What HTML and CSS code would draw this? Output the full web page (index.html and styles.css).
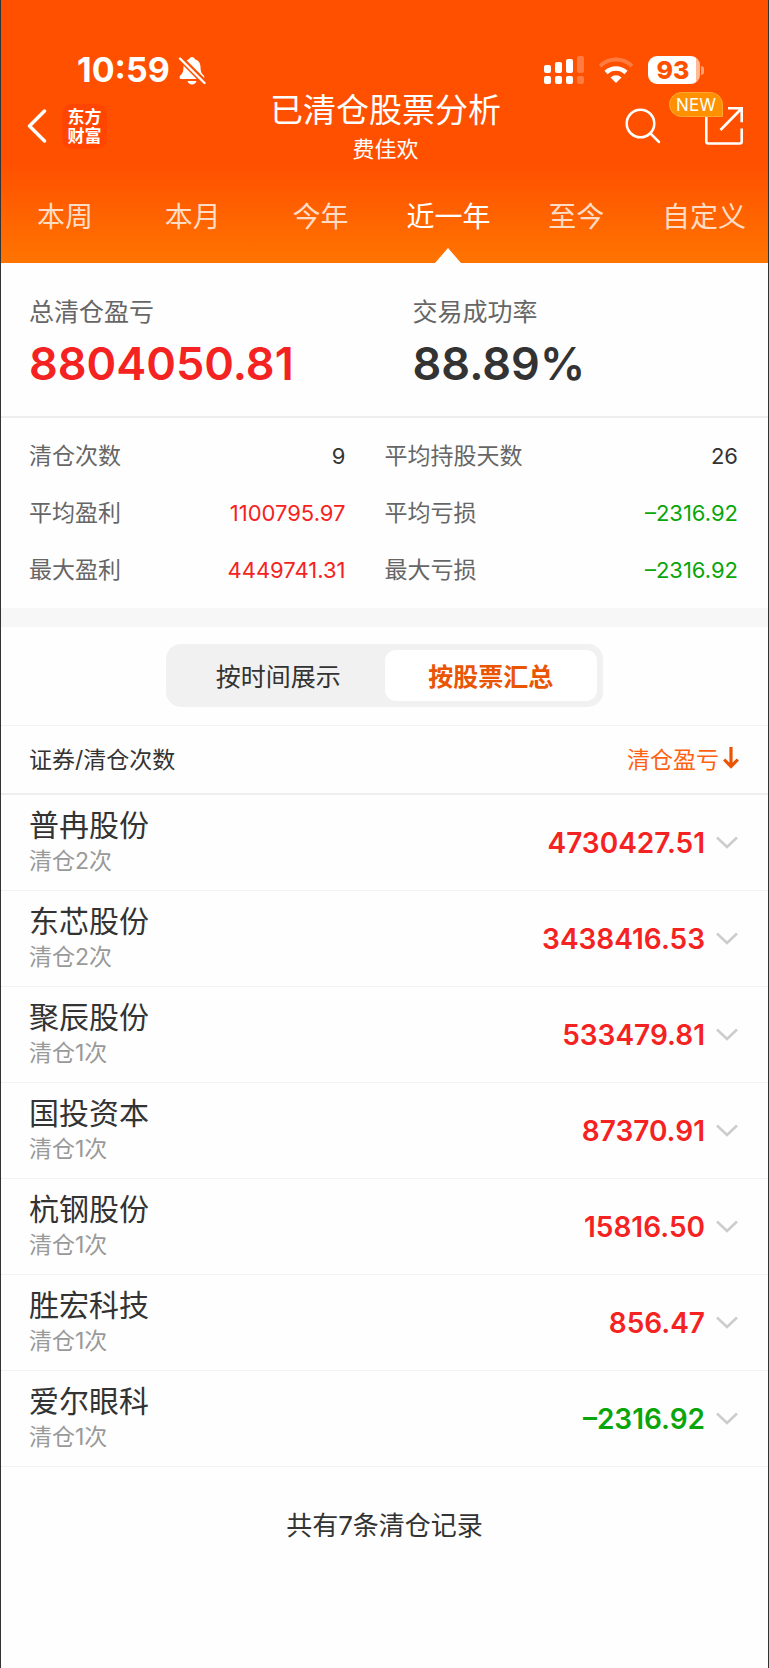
FILE: index.html
```html
<!DOCTYPE html>
<html lang="zh-CN">
<head>
  <meta charset="UTF-8" />
  <meta name="viewport" content="width=device-width, initial-scale=1" />
  <title>已清仓股票分析</title>

  <link rel="stylesheet" href="styles.css">
</head>
<body>

  <header class="header">
    <!-- Status bar -->
    <div class="status-bar">
      <div class="status-left">
        <span class="clock">10:59</span>
        <svg class="icon-bell" width="28" height="29" viewBox="0 0 28 29" aria-hidden="true">
          <path fill="#fff" d="M14 1c-1.500 0-2.600 1-2.900 2.200C7.200 4.400 5.500 7.500 5.500 11c0 4-.8 6.300-3 8.200C1.300 20.300 1.200 23 3.200 23h21.600c2 0 1.900-2.700.7-3.800-2.200-1.900-3-4.200-3-8.200 0-3.500-1.700-6.600-5.600-7.800C16.600 2 15.500 1 14 1zM9.500 25h9c-.6 2.200-2.200 3.500-4.500 3.500S10.100 27.200 9.500 25z"/>
          <path stroke="#ff5000" stroke-width="6" d="M1 1l27 27"/>
          <path stroke="#fff" stroke-width="2.400" stroke-linecap="round" d="M2 2.500l24.500 24.500"/>
        </svg>
      </div>
      <div class="status-right">
        <svg width="40" height="28" viewBox="0 0 40 28" fill="#fff" aria-hidden="true">
          <rect x="0" y="9" width="7" height="8" rx="2"/>
          <rect x="11" y="6" width="7" height="11" rx="2"/>
          <rect x="22" y="3" width="7" height="14" rx="2"/>
          <rect x="33" y="0" width="7" height="17" rx="2" opacity=".25"/>
          <rect x="0" y="20" width="7" height="8" rx="2"/>
          <rect x="11" y="20" width="7" height="8" rx="2"/>
          <rect x="22" y="20" width="7" height="8" rx="2"/>
          <rect x="33" y="20" width="7" height="8" rx="2" opacity=".25"/>
        </svg>
        <svg class="icon-wifi" width="36" height="28" viewBox="0 0 36 28" fill="none" stroke="#fff" aria-hidden="true">
          <path stroke-width="4" opacity=".25" d="M2 10a23 23 0 0 1 32 0"/>
          <path stroke-width="4.500" d="M8 16.500a14.500 14.500 0 0 1 20 0"/>
          <path fill="#fff" stroke="none" d="M18 27l-5.500-5.500a8 8 0 0 1 11 0z"/>
        </svg>
        <div class="battery">
          <span class="battery-body">93</span>
          <span class="battery-cap"></span>
        </div>
      </div>
    </div>

    <!-- Title bar -->
    <div class="title-bar">
      <div class="title-left">
        <button class="icon-btn" type="button" aria-label="返回">
          <svg width="20" height="34" viewBox="0 0 20 34" fill="none" stroke="#fff" stroke-width="3.500" stroke-linecap="round" stroke-linejoin="round"><path d="M17.500 2L2.500 17l15 15"/></svg>
        </button>
        <div class="logo">东方<br>财富</div>
      </div>
      <div class="title-center">
        <h1>已清仓股票分析</h1>
        <p>费佳欢</p>
      </div>
      <div class="title-right">
        <button class="icon-btn" type="button" aria-label="搜索">
          <svg width="36" height="36" viewBox="0 0 36 36" fill="none" stroke="#fff" stroke-width="2.500" stroke-linecap="round"><circle cx="15.500" cy="15.500" r="13.800"/><path d="M25.500 25.500l8.500 8.500"/></svg>
        </button>
        <button class="icon-btn share" type="button" aria-label="分享">
          <svg width="40" height="40" viewBox="0 0 40 40" fill="none" stroke="#fff" stroke-width="2.600"><path d="M2.300 6v29.500q0 2 2 2h31.400q2 0 2-2V22.500M24 2.300h13.700v14M37 3L16.500 24"/></svg>
          <span class="badge">NEW</span>
        </button>
      </div>
    </div>

    <!-- Period tabs -->
    <nav class="tabs" aria-label="统计区间">
      <button type="button">本周</button>
      <button type="button">本月</button>
      <button type="button">今年</button>
      <button type="button" class="active">近一年</button>
      <button type="button">至今</button>
      <button type="button">自定义</button>
    </nav>
  </header>

  <main>
    <section class="summary">
      <div>
        <p class="summary-label">总清仓盈亏</p>
        <p class="summary-value red">8804050.81</p>
      </div>
      <div>
        <p class="summary-label">交易成功率</p>
        <p class="summary-value">88.89%</p>
      </div>
    </section>

    <dl class="stats">
      <div><dt>清仓次数</dt><dd>9</dd></div>
      <div><dt>平均持股天数</dt><dd>26</dd></div>
      <div><dt>平均盈利</dt><dd class="red">1100795.97</dd></div>
      <div><dt>平均亏损</dt><dd class="green">–2316.92</dd></div>
      <div><dt>最大盈利</dt><dd class="red">4449741.31</dd></div>
      <div><dt>最大亏损</dt><dd class="green">–2316.92</dd></div>
    </dl>

    <div class="switch-wrap">
      <div class="switch">
        <button type="button">按时间展示</button>
        <button type="button" class="active">按股票汇总</button>
      </div>
    </div>

    <table class="stocks">
      <thead>
        <tr>
          <th>证券/清仓次数</th>
          <th>
            <button class="sort" type="button">清仓盈亏<svg width="16" height="22" viewBox="0 0 16 22" fill="none" stroke="#ea5504" stroke-width="3.200" aria-hidden="true"><path d="M8 0v20M1.200 12.500L8 19.500l6.800-7"/></svg></button>
          </th>
        </tr>
      </thead>
      <tbody>
        <tr>
          <td><span class="name">普冉股份</span><span class="count">清仓2次</span></td>
          <td><button class="amount red" type="button">4730427.51<svg class="chevron" width="22" height="13" viewBox="0 0 22 13"><path d="M1 1.500l10 9.500L21 1.500"/></svg></button></td>
        </tr>
        <tr>
          <td><span class="name">东芯股份</span><span class="count">清仓2次</span></td>
          <td><button class="amount red" type="button">3438416.53<svg class="chevron" width="22" height="13" viewBox="0 0 22 13"><path d="M1 1.500l10 9.500L21 1.500"/></svg></button></td>
        </tr>
        <tr>
          <td><span class="name">聚辰股份</span><span class="count">清仓1次</span></td>
          <td><button class="amount red" type="button">533479.81<svg class="chevron" width="22" height="13" viewBox="0 0 22 13"><path d="M1 1.500l10 9.500L21 1.500"/></svg></button></td>
        </tr>
        <tr>
          <td><span class="name">国投资本</span><span class="count">清仓1次</span></td>
          <td><button class="amount red" type="button">87370.91<svg class="chevron" width="22" height="13" viewBox="0 0 22 13"><path d="M1 1.500l10 9.500L21 1.500"/></svg></button></td>
        </tr>
        <tr>
          <td><span class="name">杭钢股份</span><span class="count">清仓1次</span></td>
          <td><button class="amount red" type="button">15816.50<svg class="chevron" width="22" height="13" viewBox="0 0 22 13"><path d="M1 1.500l10 9.500L21 1.500"/></svg></button></td>
        </tr>
        <tr>
          <td><span class="name">胜宏科技</span><span class="count">清仓1次</span></td>
          <td><button class="amount red" type="button">856.47<svg class="chevron" width="22" height="13" viewBox="0 0 22 13"><path d="M1 1.500l10 9.500L21 1.500"/></svg></button></td>
        </tr>
        <tr>
          <td><span class="name">爱尔眼科</span><span class="count">清仓1次</span></td>
          <td><button class="amount green" type="button">–2316.92<svg class="chevron" width="22" height="13" viewBox="0 0 22 13"><path d="M1 1.500l10 9.500L21 1.500"/></svg></button></td>
        </tr>
      </tbody>
    </table>

    <p class="total">共有7条清仓记录</p>
  </main>

</body>
</html>
```
FILE: styles.css
```css
/* Base */
* {
  box-sizing: border-box;
}
body {
  margin: 0;
  min-height: 100vh;
  border: solid #333;
  border-width: 0 1px;
  background: #fefefe;
  color: #333;
  font-family: Inter, "Noto Sans CJK SC", sans-serif;
}
h1, p, dl, dd {
  margin: 0;
  font-weight: 400;
}
button {
  padding: 0;
  border: none;
  background: none;
  color: inherit;
  font: inherit;
  cursor: pointer;
}
svg {
  display: block;
}
.red {
  color: #f52222;
}
.green {
  color: #0aa50a;
}

/* Header */
.header {
  padding-top: 56px;
  background: linear-gradient(#ff5000 62%, #ff7400);
  color: #fff;
}
.status-bar {
  display: flex;
  justify-content: space-between;
  height: 28px;
  padding: 0 64px 0 76px;
}
.status-left, .status-right {
  display: flex;
  align-items: center;
}
.clock {
  font-size: 34px;
  font-weight: 700;
  line-height: 28px;
}
.icon-bell {
  margin-left: 8px;
}
.icon-wifi {
  margin: 0 14px;
}
.battery {
  display: flex;
  align-items: center;
  gap: 1px;
}
.battery-body {
  width: 52px;
  height: 28px;
  padding-right: 2px;
  border-radius: 9px;
  background: linear-gradient(90deg, #fff 93%, #ffb999 93%);
  color: #ff5000;
  font-size: 25px;
  font-weight: 800;
  line-height: 28px;
  text-align: center;
}
.battery-cap {
  width: 3px;
  height: 9px;
  border-radius: 0 4px 4px 0;
  background: #ffa27a;
}

/* Title bar */
.title-bar {
  display: grid;
  grid-template-columns: 1fr auto 1fr;
  align-items: center;
  height: 84px;
  padding: 0 24px 0 26px;
}
.title-left {
  display: flex;
  align-items: center;
  gap: 15px;
}
.logo {
  width: 45px;
  height: 45px;
  padding-top: 4px;
  border-radius: 10px;
  background: #ff4500;
  font-size: 17px;
  font-weight: 700;
  line-height: 19px;
  text-align: center;
}
.title-center {
  padding-top: 6px;
  text-align: center;
}
.title-center h1 {
  font-size: 33px;
  line-height: 40px;
}
.title-center p {
  font-size: 22px;
  line-height: 38px;
}
.title-right {
  display: flex;
  align-items: center;
  justify-content: flex-end;
  gap: 43px;
}
.share {
  position: relative;
}
.badge {
  position: absolute;
  top: -14px;
  right: 21px;
  width: 54px;
  height: 25px;
  border: 1px solid #ffa733;
  border-radius: 13px 13px 0 13px;
  background: #ff9100;
  font-size: 17px;
  line-height: 24px;
  text-align: center;
}

/* Period tabs */
.tabs {
  display: flex;
}
.tabs button {
  position: relative;
  flex: 1;
  height: 95px;
  padding-bottom: 2px;
  color: #ffdcc5;
  font-size: 28px;
  white-space: nowrap;
}
.tabs .active {
  color: #fff;
}
.tabs .active::after {
  content: "";
  position: absolute;
  bottom: 0;
  left: 50%;
  margin-left: -13px;
  border: solid transparent;
  border-width: 0 13px 15px;
  border-bottom-color: #fff;
}

/* Summary */
.summary {
  display: grid;
  grid-template-columns: 1fr 1fr;
  padding: 31px 0 24px;
  border-bottom: 2px solid #eee;
}
.summary div {
  padding-left: 28px;
}
.summary-label {
  margin-bottom: 6px;
  color: #666;
  font-size: 25px;
  line-height: 36px;
}
.summary-value {
  font-size: 45px;
  font-weight: 600;
  line-height: 56px;
}

/* Stats */
.stats {
  display: grid;
  grid-template-columns: 1fr 1fr;
  padding: 10px 0 9px;
  border-bottom: 19px solid #f7f7f7;
  font-size: 23px;
  line-height: 57px;
}
.stats div {
  display: flex;
  justify-content: space-between;
  padding: 0 39px 0 28px;
}
.stats div:nth-child(even) {
  padding: 0 30px 0 0;
}
.stats dt {
  color: #666;
}
.stats dd {
  font-size: 22px;
}

/* Display switch */
.switch-wrap {
  padding: 17px 0 18px;
  border-bottom: 1px solid #f2f2f2;
}
.switch {
  display: flex;
  width: 57%;
  height: 63px;
  margin: 0 auto;
  padding: 6px;
  border-radius: 15px;
  background: #f1f1f1;
}
.switch button {
  flex: 1;
  padding-bottom: 2px;
  border-radius: 11px;
  font-size: 25px;
}
.switch .active {
  background: #fff;
  color: #ea5504;
  font-weight: 700;
}

/* Stock list */
.stocks {
  width: 100%;
  border-spacing: 0;
}
.stocks th {
  height: 69px;
  padding: 0 0 3px 28px;
  border-bottom: 2px solid #eee;
  font-size: 23px;
  font-weight: 400;
  text-align: left;
}
.stocks td {
  height: 96px;
  padding: 0 0 0 28px;
  border-bottom: 1px solid #f2f2f2;
}
.stocks th:last-child {
  padding: 0 29px 3px 0;
}
.stocks td:last-child {
  padding: 0 30px 0 0;
}
.sort, .amount {
  display: flex;
  align-items: center;
  margin-left: auto;
}
.sort {
  gap: 4px;
  color: #ff6210;
}
.name, .count {
  display: block;
  line-height: 36px;
}
.name {
  font-size: 30px;
}
.count {
  color: #999;
  font-size: 23px;
}
.amount {
  gap: 11px;
  font-size: 28px;
  font-weight: 600;
}
.chevron {
  fill: none;
  stroke: #ccc;
  stroke-width: 2.500;
}

.total {
  padding: 39px 0;
  font-size: 26px;
  line-height: 40px;
  text-align: center;
}
```
